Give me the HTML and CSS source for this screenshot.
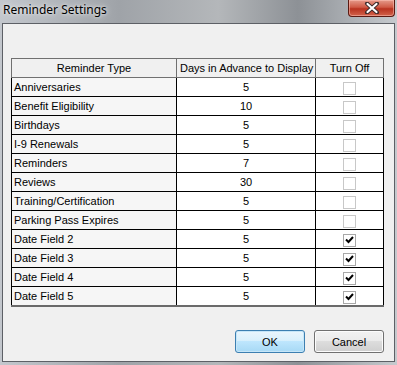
FILE: index.html
```html
<!DOCTYPE html>
<html>
<head>
  <title>Reminder Settings</title>
  <link rel="stylesheet" href="styles.css">
</head>
<body>
  <div class="window">
    <!-- Title bar -->
    <div class="titlebar">
      <span class="title">Reminder Settings</span>
      <div class="close-button">
        <svg width="16" height="12" viewBox="0 0 16 12">
          <path d="M3 1.5 L13 10.5 M13 1.5 L3 10.5" stroke="#3a2a2a" stroke-width="4" stroke-linecap="round"/>
          <path d="M3.5 2 L12.5 10 M12.5 2 L3.5 10" stroke="#fff" stroke-width="2.2" stroke-linecap="round"/>
        </svg>
      </div>
    </div>

    <!-- Dialog body -->
    <div class="client">
      <table class="reminder-grid">
        <thead>
          <tr>
            <th class="col-type">Reminder Type</th>
            <th class="col-days">Days in Advance to Display</th>
            <th class="col-off">Turn Off</th>
          </tr>
        </thead>
        <tbody>
          <tr><td class="type">Anniversaries</td><td class="days">5</td><td class="off"><span class="check"></span></td></tr>
          <tr><td class="type">Benefit Eligibility</td><td class="days">10</td><td class="off"><span class="check"></span></td></tr>
          <tr><td class="type">Birthdays</td><td class="days">5</td><td class="off"><span class="check"></span></td></tr>
          <tr><td class="type">I-9 Renewals</td><td class="days">5</td><td class="off"><span class="check"></span></td></tr>
          <tr><td class="type">Reminders</td><td class="days">7</td><td class="off"><span class="check"></span></td></tr>
          <tr><td class="type">Reviews</td><td class="days">30</td><td class="off"><span class="check"></span></td></tr>
          <tr><td class="type">Training/Certification</td><td class="days">5</td><td class="off"><span class="check"></span></td></tr>
          <tr><td class="type">Parking Pass Expires</td><td class="days">5</td><td class="off"><span class="check"></span></td></tr>
          <tr><td class="type">Date Field 2</td><td class="days">5</td><td class="off"><span class="check checked"><svg width="9" height="8" viewBox="0 0 9 8"><path d="M1 3.5 L3.5 6 L8 1" stroke="#000" stroke-width="2" fill="none"/></svg></span></td></tr>
          <tr><td class="type">Date Field 3</td><td class="days">5</td><td class="off"><span class="check checked"><svg width="9" height="8" viewBox="0 0 9 8"><path d="M1 3.5 L3.5 6 L8 1" stroke="#000" stroke-width="2" fill="none"/></svg></span></td></tr>
          <tr><td class="type">Date Field 4</td><td class="days">5</td><td class="off"><span class="check checked"><svg width="9" height="8" viewBox="0 0 9 8"><path d="M1 3.5 L3.5 6 L8 1" stroke="#000" stroke-width="2" fill="none"/></svg></span></td></tr>
          <tr><td class="type">Date Field 5</td><td class="days">5</td><td class="off"><span class="check checked"><svg width="9" height="8" viewBox="0 0 9 8"><path d="M1 3.5 L3.5 6 L8 1" stroke="#000" stroke-width="2" fill="none"/></svg></span></td></tr>
        </tbody>
      </table>

      <div class="button-row">
        <button class="dialog-button default">OK</button>
        <button class="dialog-button">Cancel</button>
      </div>
    </div>
  </div>
</body>
</html>
```

FILE: styles.css
```css
body {
  margin: 0;
  background-color: #c9ced6;
  font-family: 'Liberation Sans', Arial, sans-serif;
  font-size: 11px;
  color: #000;
}
.window {
  width: 397px;
  height: 365px;
  display: flex;
  flex-direction: column;
  background: linear-gradient(90deg, #c3c7cd 0%, #9fa3a8 30%, #b4b7ba 55%, #8d9196 75%, #c6cace 100%);
}
.titlebar {
  height: 23px;
  display: flex;
  align-items: flex-start;
  justify-content: space-between;
}
.title {
  font-family: 'Noto Sans', sans-serif;
  font-size: 12px;
  line-height: 12px;
  margin: 4px 0 0 3px;
  color: #000;
  text-shadow: 0 0 6px #e8e8e8, 0 0 3px #e8e8e8;
}
.close-button {
  width: 45px;
  height: 16px;
  margin-right: 2px;
  display: flex;
  align-items: center;
  justify-content: center;
  border: 1px solid #5b1a12;
  border-top: none;
  border-radius: 0 0 4px 4px;
  background: linear-gradient(#e59a8a 0%, #cf5a46 45%, #b8321f 55%, #d2634b 100%);
  box-shadow: inset 0 0 0 1px rgba(255, 200, 190, 0.5);
}
.client {
  flex: 1;
  margin: 0 2px 3px 2px;
  border: 1px solid #5d6066;
  background-color: #f0f0f0;
  padding: 34px 10px 8px 8px;
  display: flex;
  flex-direction: column;
}
.reminder-grid {
  border-collapse: collapse;
  width: 373px;
  table-layout: fixed;
  border-bottom: 2px solid #6a6a6a;
}
.reminder-grid th, .reminder-grid td {
  border: 1px solid #000;
  height: 18px;
  padding: 0 3px;
  font-weight: normal;
  white-space: nowrap;
  overflow: hidden;
  line-height: 18px;
}
.reminder-grid th {
  background-color: #f0f0f0;
  text-align: center;
  border-color: #707070;
}
.col-type {
  width: 158px;
}
.col-days {
  width: 132px;
}
.reminder-grid td.type {
  background-color: #f6f6f6;
  text-align: left;
  padding-left: 2px;
}
.reminder-grid td.days {
  background-color: #fff;
  text-align: center;
}
.reminder-grid td.off {
  background-color: #fff;
  text-align: center;
}
.check {
  display: inline-flex;
  align-items: center;
  justify-content: center;
  width: 11px;
  height: 11px;
  border: 1px solid #c8c8c8;
  background-color: #fff;
  vertical-align: middle;
}
.check.checked {
  border-color: #a8a8a8;
}
.button-row {
  margin-top: auto;
  display: flex;
  justify-content: flex-end;
  gap: 9px;
}
.dialog-button {
  width: 70px;
  height: 23px;
  font-family: 'Liberation Sans', Arial, sans-serif;
  font-size: 11px;
  color: #000;
  border: 1px solid #707070;
  border-radius: 3px;
  background: linear-gradient(#f2f2f2 0%, #ebebeb 45%, #dddddd 50%, #cfcfcf 100%);
  box-shadow: inset 0 0 0 1px #fcfcfc;
  padding: 0;
}
.dialog-button.default {
  border-color: #3c7fb1;
  background: linear-gradient(#eaf6fd 0%, #d9f0fc 45%, #bee6fd 50%, #a7d9f5 100%);
  box-shadow: inset 0 0 0 1px #c6e6f8;
}
```
